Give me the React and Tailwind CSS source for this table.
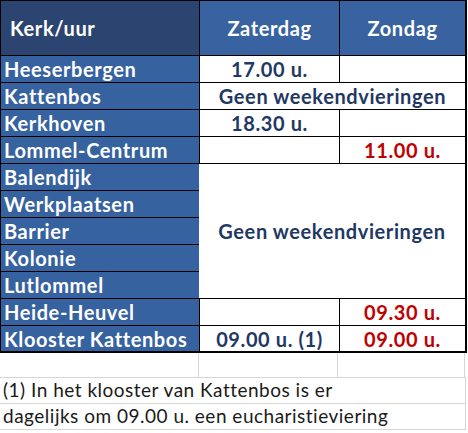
import React from 'react';

const kerken = [
  { naam: 'Heeserbergen', zat: '17.00 u.', zon: '' },
  { naam: 'Kattenbos', geen: true },
  { naam: 'Kerkhoven', zat: '18.30 u.', zon: '' },
  { naam: 'Lommel-Centrum', zat: '', zon: '11.00 u.' },
  { naam: 'Balendijk', blok: 'start' },
  { naam: 'Werkplaatsen', blok: true },
  { naam: 'Barrier', blok: true },
  { naam: 'Kolonie', blok: true },
  { naam: 'Lutlommel', blok: true },
  { naam: 'Heide-Heuvel', zat: '', zon: '09.30 u.' },
  { naam: 'Klooster Kattenbos', zat: '09.00 u. (1)', zon: '09.00 u.' },
];

const font = { fontFamily: 'Lato, "Open Sans", sans-serif' };

const App = () => {
  return (
    <div className="w-[468px] h-[433px] bg-white" style={font}>
      {/* schema */}
      <div className="grid grid-cols-[198px_140px_128px] grid-rows-[55px_repeat(11,27px)] w-[466px] border-t border-l border-black box-content text-[20px] font-bold tracking-[0.6px]">
        <div className="bg-[#2b4570] text-white flex items-center pl-[9px] border-b border-black">
          Kerk/uur
        </div>
        <div className="bg-[#3863a0] text-white flex items-center justify-center border-l border-b border-black">
          Zaterdag
        </div>
        <div className="bg-[#3863a0] text-white flex items-center justify-center border-l border-b border-r-2 border-black">
          Zondag
        </div>

        {kerken.map((k, i) => {
          const last = i === kerken.length - 1;
          const rowB = last ? 'border-b-2' : 'border-b';
          const cells = [
            <div
              key={k.naam}
              className={`bg-[#3762a0] text-white leading-none flex items-center pl-[3px] border-black ${rowB}`}
            >
              {k.naam}
            </div>,
          ];
          if (k.geen) {
            cells.push(
              <div key={k.naam + 'g'} className="col-span-2 flex items-center justify-center text-[#1f3864] border-l border-b border-r-2 border-black">
                Geen weekendvieringen
              </div>,
            );
          } else if (k.blok === 'start') {
            cells.push(
              <div key={k.naam + 'b'} className="col-span-2 row-span-5 flex items-center justify-center text-[#1f3864] border-b border-r-2 border-black">
                Geen weekendvieringen
              </div>,
            );
          } else if (!k.blok) {
            cells.push(
              <div key={k.naam + 'z'} className={`flex items-center justify-center text-[#1f3864] border-l border-black ${rowB}`}>
                {k.zat}
              </div>,
              <div key={k.naam + 'o'} className={`flex items-center justify-center text-[#c00000] border-l border-r-2 border-black ${rowB}`}>
                {k.zon}
              </div>,
            );
          }
          return cells;
        })}
      </div>

      {/* voetnoot */}
      <div className="grid grid-cols-[199px_139px_127px] h-[24px] w-[466px]">
        <div className="border-r border-[#d6d6d6]"></div>
        <div className="border-r border-[#d6d6d6]"></div>
        <div className="border-r border-[#d6d6d6]"></div>
      </div>
      <div className="w-[466px] border-r border-[#d6d6d6] text-[#1a1a1a] text-[19px] tracking-[0.5px]">
        <div className="h-[26px] border-t border-[#d6d6d6] flex items-center pl-[3px]">
          (1) In het klooster van Kattenbos is er
        </div>
        <div className="h-[27px] border-t border-b border-[#d6d6d6] flex items-center pl-[3px]">
          dagelijks om 09.00 u. een eucharistieviering
        </div>
      </div>
    </div>
  );
};

export default App;
